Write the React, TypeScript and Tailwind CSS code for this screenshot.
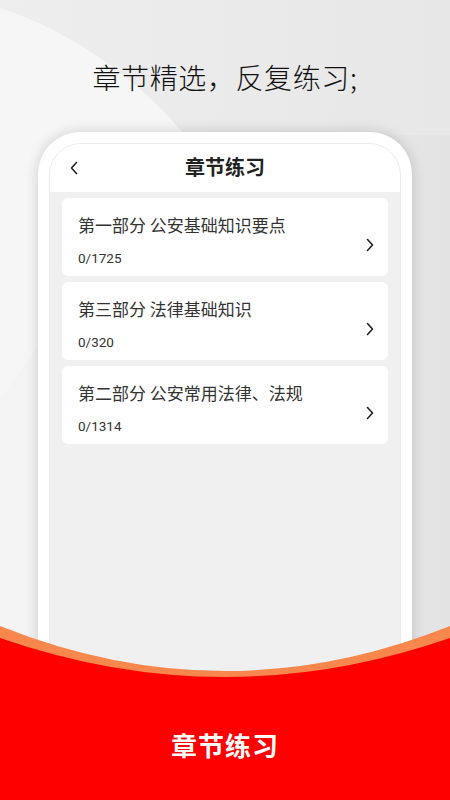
import React from 'react';

const cjk = { fontFamily: '"Noto Sans CJK SC", "Noto Sans", sans-serif' };

const chapters = [
  { title: '第一部分 公安基础知识要点', count: '0/1725' },
  { title: '第三部分 法律基础知识', count: '0/320' },
  { title: '第二部分 公安常用法律、法规', count: '0/1314' },
];

const Chevron: React.FC<{ dir: 'left' | 'right'; className?: string }> = ({ dir, className }) => (
  <svg viewBox="0 0 8 14" className={className} fill="none" stroke="#222" strokeWidth="1.6" strokeLinecap="round" strokeLinejoin="round">
    {dir === 'right' ? <path d="M1.5 1.5 L6.5 7 L1.5 12.5" /> : <path d="M6.5 1.5 L1.5 7 L6.5 12.5" />}
  </svg>
);

export default function App() {
  return (
    <div
      className="relative w-[450px] h-[800px] overflow-hidden bg-gradient-to-r from-[#f4f4f4] via-[#ececec] to-[#e3e3e3]"
      style={cjk}
    >
      {/* soft light shape in the top-left corner */}
      <svg className="absolute left-0 top-0" width="450" height="400" viewBox="0 0 450 400">
        <path d="M0 8 C70 30 140 80 185 135 L0 400 Z" fill="#f6f6f6" />
        <path d="M0 0 L0 8 C70 30 140 80 185 135 L450 135 L450 0 Z" fill="#e9e9e9" opacity="0.6" />
      </svg>

      <div className="relative flex flex-col items-center pt-[57px]">
        <h1 className="text-[28px] leading-[40px] font-light text-[#111] tracking-[0.6px]">章节精选，反复练习;</h1>

        <div className="mt-[35px] w-[374px] h-[700px] rounded-[42px] bg-white px-[11px] pt-[11px] shadow-[0_0_14px_rgba(0,0,0,0.16)]">
          <div className="h-full rounded-t-[32px] border border-[#ececec] bg-[#f0f0f0] overflow-hidden">
            <div className="relative flex h-[48px] items-center justify-center bg-white">
              <Chevron dir="left" className="absolute left-[20px] top-[17px] w-[8px] h-[14px]" />
              <span className="text-[20px] font-bold text-[#222] -mt-[2px]">章节练习</span>
            </div>

            <div className="flex flex-col gap-[6px] px-[12px] pt-[6px]">
              {chapters.map((c) => (
                <div key={c.title} className="relative h-[78px] rounded-[6px] bg-white pl-[16px]">
                  <div className="pt-[15px] text-[17px] leading-[24px] text-[#333]">{c.title}</div>
                  <div className="mt-[12px] text-[13.5px] leading-[18px] text-[#333]" style={{ fontFamily: 'Roboto, "Noto Sans CJK SC", sans-serif' }}>
                    {c.count}
                  </div>
                  <Chevron dir="right" className="absolute right-[14px] top-[40px] w-[8px] h-[14px]" />
                </div>
              ))}
            </div>
          </div>
        </div>
      </div>

      {/* red curved footer */}
      <div className="absolute left-0 bottom-0 w-[450px] h-[180px]">
        <svg className="absolute inset-0" width="450" height="180" viewBox="0 0 450 180">
          <path d="M0 6 Q225 96 450 6 L450 180 L0 180 Z" fill="#f7874c" />
          <path d="M0 18 Q225 96 450 18 L450 180 L0 180 Z" fill="#ff0000" />
        </svg>
        <div className="absolute left-0 right-0 top-[108px] flex justify-center">
          <span className="text-[26px] leading-[34px] font-bold text-white tracking-[1px]">章节练习</span>
        </div>
      </div>
    </div>
  );
}
